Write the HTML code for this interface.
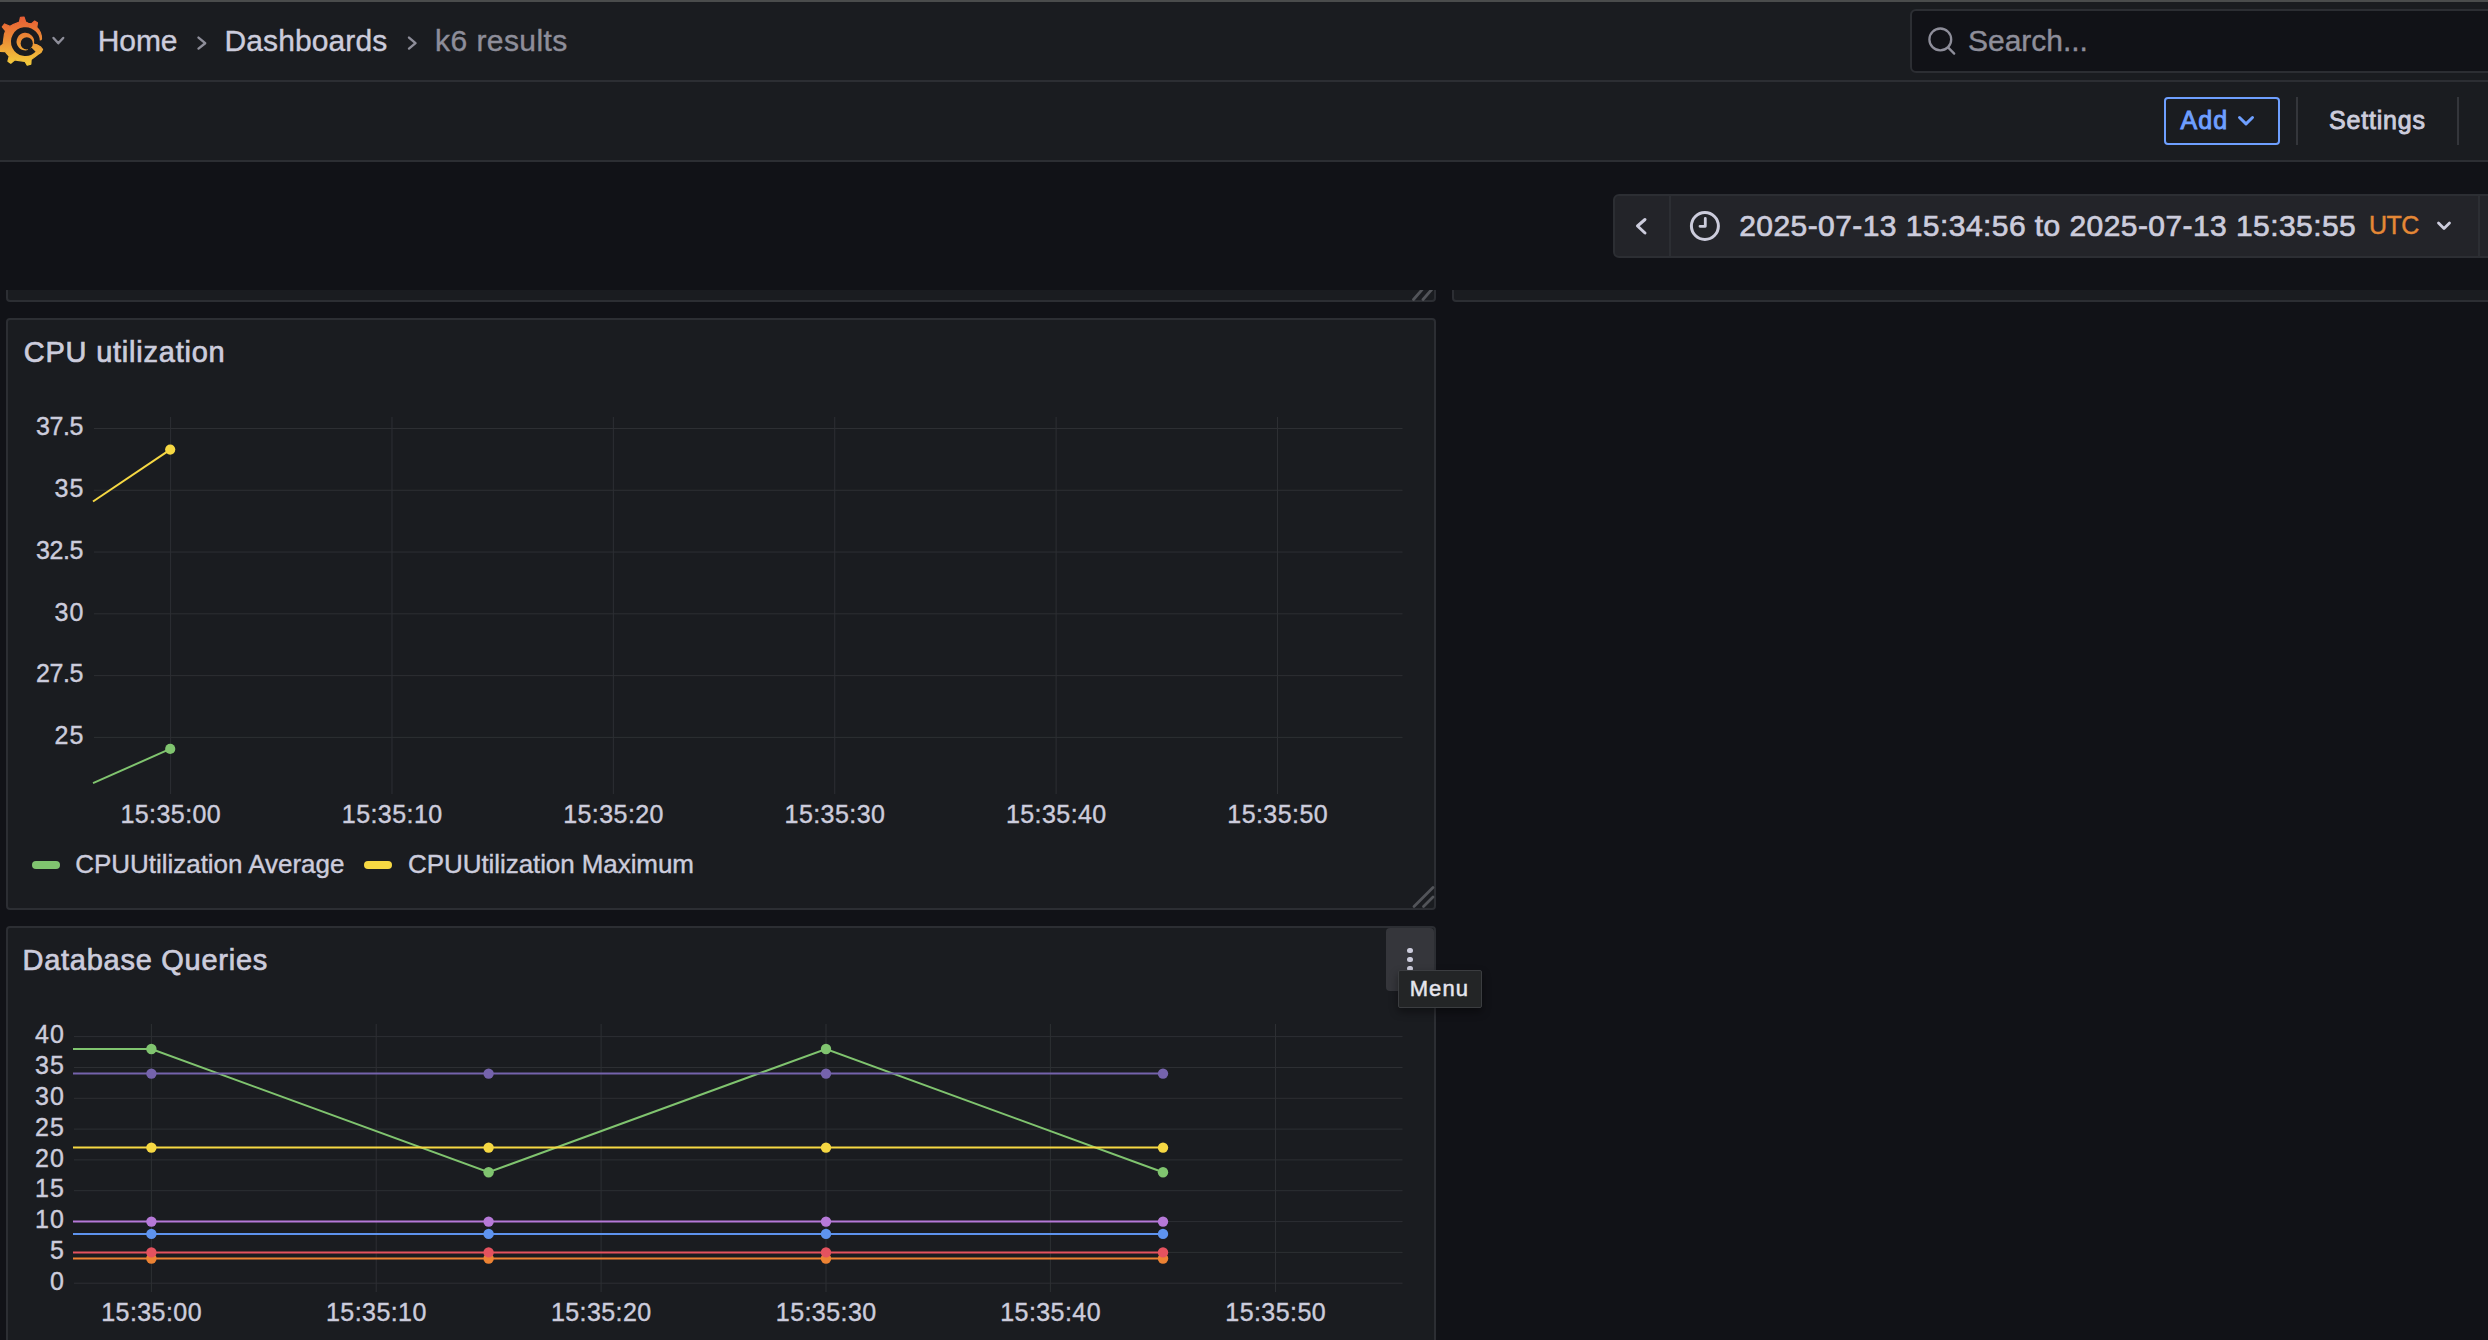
<!DOCTYPE html>
<html><head><meta charset="utf-8">
<style>
html,body{margin:0;padding:0;}
body{width:2488px;height:1340px;overflow:hidden;background:#111217;font-family:"Liberation Sans",sans-serif;position:relative;color:#ccccdc;}
.a{position:absolute;}
.t{position:absolute;white-space:pre;line-height:1;-webkit-text-stroke:0.4px currentColor;}
.tb{-webkit-text-stroke:0;}
.panel{position:absolute;background:#1a1c20;border:2px solid #2c2e33;border-radius:4px;box-sizing:border-box;}
svg{position:absolute;left:0;top:0;overflow:visible;}
</style></head><body>
<div class="a" style="left:0;top:0;width:2488px;height:2px;background:#4a4c4c;"></div>
<div class="a" style="left:0;top:2px;width:2488px;height:78px;background:#1a1c20;border-bottom:2px solid #2c2e33;"></div>
<div class="a" style="left:0;top:82px;width:2488px;height:78px;background:#1a1c20;border-bottom:2px solid #2c2e33;"></div>
<div class="a" style="left:1910px;top:9px;width:640px;height:64px;box-sizing:border-box;border:2px solid #2c2e33;border-radius:6px;background:#111217;"></div>
<div class="t" style="left:1968.0px;top:26.0px;font-size:30px;color:#8e8e9a;letter-spacing:-0.025px;">Search...</div>
<div class="t" style="left:97.8px;top:26.0px;font-size:30px;color:#ccccdc;letter-spacing:-0.133px;">Home</div>
<div class="t" style="left:224.5px;top:26.0px;font-size:30px;color:#ccccdc;letter-spacing:0.111px;">Dashboards</div>
<div class="t" style="left:435.1px;top:26.0px;font-size:30px;color:#8e8e9a;letter-spacing:0.422px;">k6 results</div>
<div class="a" style="left:2164px;top:97px;width:116px;height:48px;box-sizing:border-box;border:2px solid #6e9fff;border-radius:4px;"></div>
<div class="t" style="left:2180.6px;top:108.0px;font-size:25px;color:#6e9fff;-webkit-text-stroke:0.9px #6e9fff;letter-spacing:1.05px;">Add</div>
<div class="a" style="left:2296px;top:97px;width:2px;height:48px;background:#34363b;"></div>
<div class="t" style="left:2329.0px;top:108.0px;font-size:25px;color:#ccccdc;-webkit-text-stroke:0.9px #ccccdc;letter-spacing:0.8px;">Settings</div>
<div class="a" style="left:2457px;top:97px;width:2px;height:48px;background:#34363b;"></div>
<div class="panel" style="left:6px;top:250px;width:1430px;height:52px;"></div>
<div class="panel" style="left:1452px;top:250px;width:1100px;height:52px;"></div>
<div class="a" style="left:0;top:162px;width:2488px;height:128px;background:#111217;"></div>
<div class="a" style="left:1613px;top:194px;width:900px;height:64px;box-sizing:border-box;border:2px solid #2c2e33;border-radius:6px;background:#232429;"></div>
<div class="a" style="left:1669px;top:194px;width:2px;height:64px;background:#2c2e33;"></div>
<div class="a" style="left:2478px;top:194px;width:2px;height:64px;background:#2c2e33;"></div>
<div class="t" style="left:1739.2px;top:211.4px;font-size:30px;color:#ccccdc;-webkit-text-stroke:0.7px #ccccdc;letter-spacing:0.434px;">2025-07-13 15:34:56 to 2025-07-13 15:35:55</div>
<div class="t" style="left:2369.0px;top:213.0px;font-size:25px;color:#e58836;-webkit-text-stroke:0.4px #e58836;letter-spacing:-0.5px;">UTC</div>
<div class="panel" style="left:6px;top:318px;width:1430px;height:592px;"></div>
<div class="t" style="left:23.8px;top:338.0px;font-size:29px;color:#ccccdc;-webkit-text-stroke:0.7px #ccccdc;letter-spacing:0.764px;">CPU utilization</div>
<div class="panel" style="left:6px;top:926px;width:1430px;height:600px;"></div>
<div class="t" style="left:22.5px;top:946.2px;font-size:29px;color:#ccccdc;-webkit-text-stroke:0.7px #ccccdc;letter-spacing:0.733px;">Database Queries</div>
<div class="t" style="right:2405.00px;top:414.20px;font-size:25px;color:#ccccdc;letter-spacing:-0.4px;">37.5</div>
<div class="t" style="right:2403.50px;top:475.98px;font-size:25px;color:#ccccdc;letter-spacing:1.1px;">35</div>
<div class="t" style="right:2405.00px;top:537.76px;font-size:25px;color:#ccccdc;letter-spacing:-0.4px;">32.5</div>
<div class="t" style="right:2403.50px;top:599.54px;font-size:25px;color:#ccccdc;letter-spacing:1.1px;">30</div>
<div class="t" style="right:2405.00px;top:661.32px;font-size:25px;color:#ccccdc;letter-spacing:-0.4px;">27.5</div>
<div class="t" style="right:2403.50px;top:723.10px;font-size:25px;color:#ccccdc;letter-spacing:1.1px;">25</div>
<div class="t" style="left:-129.19px;width:600px;text-align:center;top:801.80px;font-size:25px;color:#ccccdc;letter-spacing:0.43px;">15:35:00</div>
<div class="t" style="left:92.20px;width:600px;text-align:center;top:801.80px;font-size:25px;color:#ccccdc;letter-spacing:0.43px;">15:35:10</div>
<div class="t" style="left:313.57px;width:600px;text-align:center;top:801.80px;font-size:25px;color:#ccccdc;letter-spacing:0.43px;">15:35:20</div>
<div class="t" style="left:534.96px;width:600px;text-align:center;top:801.80px;font-size:25px;color:#ccccdc;letter-spacing:0.43px;">15:35:30</div>
<div class="t" style="left:756.33px;width:600px;text-align:center;top:801.80px;font-size:25px;color:#ccccdc;letter-spacing:0.43px;">15:35:40</div>
<div class="t" style="left:977.72px;width:600px;text-align:center;top:801.80px;font-size:25px;color:#ccccdc;letter-spacing:0.43px;">15:35:50</div>
<div class="t" style="left:75.3px;top:851.2px;font-size:26px;color:#ccccdc;letter-spacing:-0.033px;">CPUUtilization Average</div>
<div class="t" style="left:408.1px;top:851.2px;font-size:26px;color:#ccccdc;letter-spacing:-0.076px;">CPUUtilization Maximum</div>
<div class="t" style="right:2423.10px;top:1268.90px;font-size:25px;color:#ccccdc;letter-spacing:1.1px;">0</div>
<div class="t" style="right:2423.10px;top:1238.08px;font-size:25px;color:#ccccdc;letter-spacing:1.1px;">5</div>
<div class="t" style="right:2423.10px;top:1207.26px;font-size:25px;color:#ccccdc;letter-spacing:1.1px;">10</div>
<div class="t" style="right:2423.10px;top:1176.44px;font-size:25px;color:#ccccdc;letter-spacing:1.1px;">15</div>
<div class="t" style="right:2423.10px;top:1145.62px;font-size:25px;color:#ccccdc;letter-spacing:1.1px;">20</div>
<div class="t" style="right:2423.10px;top:1114.80px;font-size:25px;color:#ccccdc;letter-spacing:1.1px;">25</div>
<div class="t" style="right:2423.10px;top:1083.98px;font-size:25px;color:#ccccdc;letter-spacing:1.1px;">30</div>
<div class="t" style="right:2423.10px;top:1053.16px;font-size:25px;color:#ccccdc;letter-spacing:1.1px;">35</div>
<div class="t" style="right:2423.10px;top:1022.34px;font-size:25px;color:#ccccdc;letter-spacing:1.1px;">40</div>
<div class="t" style="left:-148.38px;width:600px;text-align:center;top:1300.30px;font-size:25px;color:#ccccdc;letter-spacing:0.43px;">15:35:00</div>
<div class="t" style="left:76.41px;width:600px;text-align:center;top:1300.30px;font-size:25px;color:#ccccdc;letter-spacing:0.43px;">15:35:10</div>
<div class="t" style="left:301.31px;width:600px;text-align:center;top:1300.30px;font-size:25px;color:#ccccdc;letter-spacing:0.43px;">15:35:20</div>
<div class="t" style="left:526.22px;width:600px;text-align:center;top:1300.30px;font-size:25px;color:#ccccdc;letter-spacing:0.43px;">15:35:30</div>
<div class="t" style="left:750.62px;width:600px;text-align:center;top:1300.30px;font-size:25px;color:#ccccdc;letter-spacing:0.43px;">15:35:40</div>
<div class="t" style="left:975.72px;width:600px;text-align:center;top:1300.30px;font-size:25px;color:#ccccdc;letter-spacing:0.43px;">15:35:50</div>
<svg width="2488" height="1340" viewBox="0 0 2488 1340"><line x1="94" y1="428.5" x2="1402.5" y2="428.5" stroke="#2d2f33" stroke-width="1"/>
<line x1="94" y1="490.28" x2="1402.5" y2="490.28" stroke="#2d2f33" stroke-width="1"/>
<line x1="94" y1="552.06" x2="1402.5" y2="552.06" stroke="#2d2f33" stroke-width="1"/>
<line x1="94" y1="613.84" x2="1402.5" y2="613.84" stroke="#2d2f33" stroke-width="1"/>
<line x1="94" y1="675.62" x2="1402.5" y2="675.62" stroke="#2d2f33" stroke-width="1"/>
<line x1="94" y1="737.4" x2="1402.5" y2="737.4" stroke="#2d2f33" stroke-width="1"/>
<line x1="170.6" y1="417" x2="170.6" y2="794" stroke="#2d2f33" stroke-width="1"/>
<line x1="391.98" y1="417" x2="391.98" y2="794" stroke="#2d2f33" stroke-width="1"/>
<line x1="613.36" y1="417" x2="613.36" y2="794" stroke="#2d2f33" stroke-width="1"/>
<line x1="834.74" y1="417" x2="834.74" y2="794" stroke="#2d2f33" stroke-width="1"/>
<line x1="1056.12" y1="417" x2="1056.12" y2="794" stroke="#2d2f33" stroke-width="1"/>
<line x1="1277.5" y1="417" x2="1277.5" y2="794" stroke="#2d2f33" stroke-width="1"/>
<polyline points="93,501.5 170.2,449.6" fill="none" stroke="#f6d843" stroke-width="2"/>
<circle cx="170.2" cy="449.6" r="5.1" fill="#f6d843"/>
<polyline points="93,783.2 170.2,748.9" fill="none" stroke="#80c46f" stroke-width="2"/>
<circle cx="170.2" cy="748.9" r="5.1" fill="#80c46f"/>
<line x1="36" y1="865" x2="56" y2="865" stroke="#80c46f" stroke-width="8" stroke-linecap="round"/>
<line x1="368" y1="865" x2="388" y2="865" stroke="#f6d843" stroke-width="8" stroke-linecap="round"/>
<line x1="74" y1="1283.2" x2="1402.5" y2="1283.2" stroke="#2d2f33" stroke-width="1"/>
<line x1="74" y1="1252.4" x2="1402.5" y2="1252.4" stroke="#2d2f33" stroke-width="1"/>
<line x1="74" y1="1221.6" x2="1402.5" y2="1221.6" stroke="#2d2f33" stroke-width="1"/>
<line x1="74" y1="1190.7" x2="1402.5" y2="1190.7" stroke="#2d2f33" stroke-width="1"/>
<line x1="74" y1="1159.9" x2="1402.5" y2="1159.9" stroke="#2d2f33" stroke-width="1"/>
<line x1="74" y1="1129.1" x2="1402.5" y2="1129.1" stroke="#2d2f33" stroke-width="1"/>
<line x1="74" y1="1098.3" x2="1402.5" y2="1098.3" stroke="#2d2f33" stroke-width="1"/>
<line x1="74" y1="1067.5" x2="1402.5" y2="1067.5" stroke="#2d2f33" stroke-width="1"/>
<line x1="74" y1="1036.6" x2="1402.5" y2="1036.6" stroke="#2d2f33" stroke-width="1"/>
<line x1="151.4" y1="1024" x2="151.4" y2="1292" stroke="#2d2f33" stroke-width="1"/>
<line x1="376.2" y1="1024" x2="376.2" y2="1292" stroke="#2d2f33" stroke-width="1"/>
<line x1="601.1" y1="1024" x2="601.1" y2="1292" stroke="#2d2f33" stroke-width="1"/>
<line x1="826" y1="1024" x2="826" y2="1292" stroke="#2d2f33" stroke-width="1"/>
<line x1="1050.4" y1="1024" x2="1050.4" y2="1292" stroke="#2d2f33" stroke-width="1"/>
<line x1="1275.5" y1="1024" x2="1275.5" y2="1292" stroke="#2d2f33" stroke-width="1"/>
<polyline points="73.0,1049.0 151.4,1049.0 488.6,1172.2 826.0,1049.0 1163.0,1172.2" fill="none" stroke="#80c46f" stroke-width="2"/>
<circle cx="151.4" cy="1049.0" r="5.2" fill="#80c46f"/>
<circle cx="488.6" cy="1172.2" r="5.2" fill="#80c46f"/>
<circle cx="826" cy="1049.0" r="5.2" fill="#80c46f"/>
<circle cx="1163" cy="1172.2" r="5.2" fill="#80c46f"/>
<polyline points="73.0,1073.6 151.4,1073.6 488.6,1073.6 826.0,1073.6 1163.0,1073.6" fill="none" stroke="#7563ac" stroke-width="2"/>
<circle cx="151.4" cy="1073.6" r="5.2" fill="#7563ac"/>
<circle cx="488.6" cy="1073.6" r="5.2" fill="#7563ac"/>
<circle cx="826" cy="1073.6" r="5.2" fill="#7563ac"/>
<circle cx="1163" cy="1073.6" r="5.2" fill="#7563ac"/>
<polyline points="73.0,1147.6 151.4,1147.6 488.6,1147.6 826.0,1147.6 1163.0,1147.6" fill="none" stroke="#f6d843" stroke-width="2"/>
<circle cx="151.4" cy="1147.6" r="5.2" fill="#f6d843"/>
<circle cx="488.6" cy="1147.6" r="5.2" fill="#f6d843"/>
<circle cx="826" cy="1147.6" r="5.2" fill="#f6d843"/>
<circle cx="1163" cy="1147.6" r="5.2" fill="#f6d843"/>
<polyline points="73.0,1221.6 151.4,1221.6 488.6,1221.6 826.0,1221.6 1163.0,1221.6" fill="none" stroke="#b679d8" stroke-width="2"/>
<circle cx="151.4" cy="1221.6" r="5.2" fill="#b679d8"/>
<circle cx="488.6" cy="1221.6" r="5.2" fill="#b679d8"/>
<circle cx="826" cy="1221.6" r="5.2" fill="#b679d8"/>
<circle cx="1163" cy="1221.6" r="5.2" fill="#b679d8"/>
<polyline points="73.0,1233.9 151.4,1233.9 488.6,1233.9 826.0,1233.9 1163.0,1233.9" fill="none" stroke="#5e93ee" stroke-width="2"/>
<circle cx="151.4" cy="1233.9" r="5.2" fill="#5e93ee"/>
<circle cx="488.6" cy="1233.9" r="5.2" fill="#5e93ee"/>
<circle cx="826" cy="1233.9" r="5.2" fill="#5e93ee"/>
<circle cx="1163" cy="1233.9" r="5.2" fill="#5e93ee"/>
<polyline points="73.0,1258.5 151.4,1258.5 488.6,1258.5 826.0,1258.5 1163.0,1258.5" fill="none" stroke="#ec8233" stroke-width="2"/>
<circle cx="151.4" cy="1258.5" r="5.2" fill="#ec8233"/>
<circle cx="488.6" cy="1258.5" r="5.2" fill="#ec8233"/>
<circle cx="826" cy="1258.5" r="5.2" fill="#ec8233"/>
<circle cx="1163" cy="1258.5" r="5.2" fill="#ec8233"/>
<polyline points="73.0,1252.4 151.4,1252.4 488.6,1252.4 826.0,1252.4 1163.0,1252.4" fill="none" stroke="#e4525f" stroke-width="2"/>
<circle cx="151.4" cy="1252.4" r="5.2" fill="#e4525f"/>
<circle cx="488.6" cy="1252.4" r="5.2" fill="#e4525f"/>
<circle cx="826" cy="1252.4" r="5.2" fill="#e4525f"/>
<circle cx="1163" cy="1252.4" r="5.2" fill="#e4525f"/>
<defs><linearGradient id="lg" gradientUnits="userSpaceOnUse" x1="0" y1="17" x2="0" y2="65"><stop offset="0" stop-color="#e95d35"/><stop offset="0.45" stop-color="#ea8a35"/><stop offset="1" stop-color="#f4cd3c"/></linearGradient></defs>
<g><path d="M4.39,34.47 L5.57,30.93 L2.29,26.80 L4.62,23.93 L9.95,26.39 L12.48,24.92 L19.39,22.03 L20.52,17.24 L24.00,17.00 L25.74,22.08 L28.32,23.29 L31.30,23.92 L34.67,21.06 L37.48,22.75 L36.79,27.28 L38.71,29.66 L40.37,32.55 L41.29,35.71 L41.51,38.28 L41.07,39.90 L37.72,40.56 L37.45,45.10 L40.34,46.69 L42.54,49.49 L40.96,52.60 L37.82,54.45 L33.53,57.86 L31.12,59.62 L30.81,64.28 L27.24,65.07 L25.02,61.47 L17.33,60.32 L14.92,59.82 L10.75,63.20 L7.93,61.15 L9.25,56.24 L6.84,53.58 L5.29,51.53 L-0.27,51.32 L-1.43,47.41 L3.12,44.20Z" fill="url(#lg)" stroke="url(#lg)" stroke-width="1.2" stroke-linejoin="round"/>
<path d="M36.75,44.01 A11.6,11.6 0 1 0 33.60,49.80" fill="none" stroke="#1a1c20" stroke-width="5.6"/>
<path d="M34.90,41.43 L44.33,39.94 L43.84,46.20 L34.69,43.58Z" fill="#1a1c20"/>
<circle cx="26.75" cy="43.4" r="6.1" fill="#1a1c20"/>
<path d="M29.32,46.46 L32.49,51.59 L28.14,53.30 L27.79,47.26Z" fill="#1a1c20"/>
</g>
<polyline points="53.5,38 58.3,43.3 63.2,38" fill="none" stroke="#8e8e9a" stroke-width="2.4" stroke-linecap="round" stroke-linejoin="round"/>
<polyline points="198.5,37.6 205.2,43.2 198.5,48.6" fill="none" stroke="#8e8e9a" stroke-width="2.4" stroke-linecap="round" stroke-linejoin="round"/>
<polyline points="409,37.6 415.5,43.2 409,48.6" fill="none" stroke="#8e8e9a" stroke-width="2.4" stroke-linecap="round" stroke-linejoin="round"/>
<circle cx="1940.3" cy="39.4" r="10.9" fill="none" stroke="#8e8e9a" stroke-width="2.3"/>
<polyline points="1948.3,47.6 1954.2,53.6" fill="none" stroke="#8e8e9a" stroke-width="2.3" stroke-linecap="round" stroke-linejoin="round"/>
<polyline points="2239.5,117.5 2246,123.8 2252.5,117.5" fill="none" stroke="#6e9fff" stroke-width="3" stroke-linecap="round" stroke-linejoin="round"/>
<polyline points="1645,219.5 1637.5,226 1645,233" fill="none" stroke="#ccccdc" stroke-width="3" stroke-linecap="round" stroke-linejoin="round"/>
<circle cx="1704.9" cy="226" r="13.5" fill="none" stroke="#ccccdc" stroke-width="3"/>
<polyline points="1705.3,218.5 1705.3,226.3 1700,226.3" fill="none" stroke="#ccccdc" stroke-width="2.8" stroke-linecap="round" stroke-linejoin="round"/>
<polyline points="2438.5,223 2444,228.5 2449.5,223" fill="none" stroke="#ccccdc" stroke-width="2.8" stroke-linecap="round" stroke-linejoin="round"/>
<line x1="1414" y1="906.5" x2="1433" y2="887.5" stroke="#525459" stroke-width="2.8" stroke-linecap="round"/>
<line x1="1423.5" y1="906.5" x2="1433" y2="897.0" stroke="#525459" stroke-width="2.8" stroke-linecap="round"/></svg>
<div class="a" style="left:1400px;top:290px;width:40px;height:14px;overflow:hidden;"><svg width="40" height="14" style="position:absolute;left:0;top:0"><line x1="13.5" y1="9.5" x2="23.5" y2="-2" stroke="#525459" stroke-width="2.8" stroke-linecap="round"/><line x1="23" y1="9.5" x2="33" y2="-2" stroke="#525459" stroke-width="2.8" stroke-linecap="round"/></svg></div>
<div class="a" style="left:1386px;top:928px;width:48px;height:63px;background:#35363b;border-radius:4px;"></div>
<div class="a" style="left:1407.4px;top:947.6999999999999px;width:5.2px;height:5.2px;border-radius:50%;background:#ccccdc;"></div>
<div class="a" style="left:1407.4px;top:957.0px;width:5.2px;height:5.2px;border-radius:50%;background:#ccccdc;"></div>
<div class="a" style="left:1407.4px;top:966.3px;width:5.2px;height:5.2px;border-radius:50%;background:#ccccdc;"></div>
<div class="a" style="left:1398px;top:970px;width:84px;height:38px;box-sizing:border-box;background:#232526;border:1px solid #3b3d40;border-radius:2px;box-shadow:0 4px 8px rgba(0,0,0,0.4);"></div>
<div class="t" style="left:1409.7px;top:978.3px;font-size:22px;color:#e6e6ee;-webkit-text-stroke:0.5px #e6e6ee;letter-spacing:1.1px;">Menu</div>
</body></html>
